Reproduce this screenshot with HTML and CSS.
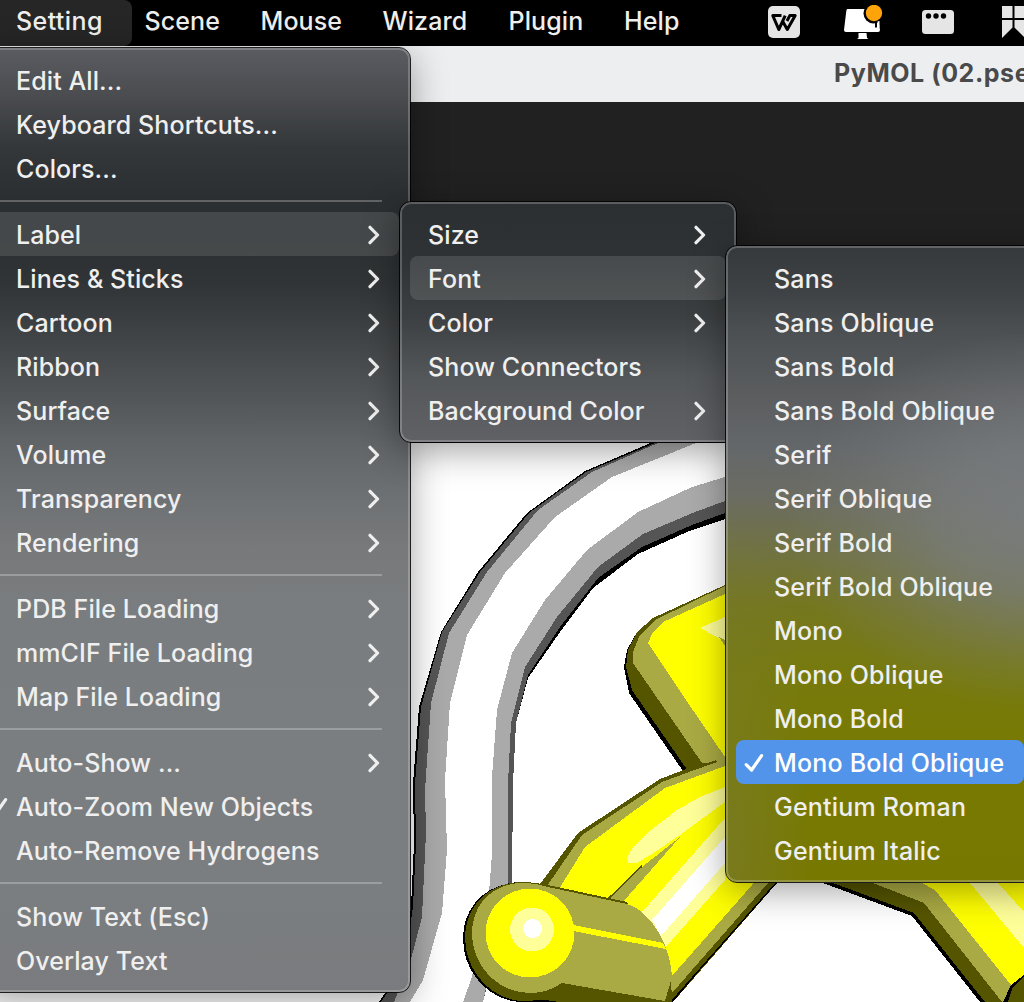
FILE: index.html
```html
<!DOCTYPE html>
<html lang="en">
<head>
<meta charset="utf-8">
<title>PyMOL</title>
<link rel="stylesheet" href="styles.css">
</head>
<body>
<svg class="defs" aria-hidden="true">
  <symbol id="chev" viewBox="0 0 12 20"><path d="M2 2.300 9.600 10 2 17.700" fill="none" stroke="currentColor" stroke-width="3.200" stroke-linecap="round" stroke-linejoin="round"/></symbol>
  <symbol id="check" viewBox="0 0 20 20"><path d="M2.200 11.600 7.600 17 17.600 2.600" fill="none" stroke="currentColor" stroke-width="3.200" stroke-linecap="round" stroke-linejoin="round"/></symbol>
</svg>

<header class="menubar">
  <nav class="titles">
    <span class="title open">Setting</span>
    <span class="title scene-title">Scene</span>
    <span class="title mouse">Mouse</span>
    <span class="title wizard">Wizard</span>
    <span class="title plugin">Plugin</span>
    <span class="title help">Help</span>
  </nav>
  <div class="status">
    <svg width="32" height="32" viewBox="0 0 32 32"><rect width="32" height="32" rx="5" fill="#e5e5e5"/><path d="M13.500 9.600H4.800L10.800 23.500 17.200 9.600M14.200 14.500 19.300 23.500 27.200 9.600H21.800L19 15" fill="none" stroke="#000" stroke-width="3" stroke-linejoin="round"/></svg>
    <svg width="40" height="36" viewBox="0 0 40 36"><path d="M4.500 4H24L35.500 16 37 25Q37 27 35 27H3Q1 27 1 25L3.300 6Q3.500 4 4.500 4Z" fill="#fff"/><path d="M15.500 28H23.500L24 33 25.500 34H14L15.500 33Z" fill="#fff"/><circle cx="30.500" cy="8.500" r="10" fill="#000"/><path d="M33 16V22.500" stroke="#000" stroke-width="2"/><path d="M34.500 16.500 36.500 23V16Z" fill="#fff"/><circle cx="31" cy="8" r="8.200" fill="#ffa30a"/></svg>
    <svg width="32" height="24" viewBox="0 0 32 24"><rect width="32" height="24" rx="3.500" fill="#e5e5e5"/><circle cx="6.500" cy="6" r="2.700"/><circle cx="14" cy="6" r="2.700"/><circle cx="21.500" cy="6" r="2.700"/></svg>
    <svg width="22" height="32" viewBox="0 0 22 32"><path d="M0 0H10.500V12H0ZM12.500 0H22V12H12.500ZM0 14H10.500V21.500L0 32ZM12.500 14H22V31L12.500 21.500Z" fill="#e5e5e5"/></svg>
  </div>
</header>

<main class="window">
  <div class="titlebar">PyMOL (02.pse</div>
  <div class="toolbar"></div>
  <svg class="viewport" viewBox="0 443 1024 559" shape-rendering="crispEdges">
    <rect y="443" width="1024" height="559" fill="#fff"/>
    <!-- ribbon tube, painted from its outline inwards -->
    <path fill="#000" d="M725 415 653 442 585 471 527 513 478 572 441 632 419 707 413 783 414 843 411 907 403 967 379 1002H483L508 883 513 783 516 723 528 678 560 632 593 588 638 554 687 532 725 519Z"/>
    <path fill="#555" d="M725 415 655 443 586 472 529 513 480 572 442 632 421 707 415 783 416 843 413 907 404 967 381 1002H483L512 883 513 783 516 723 528 675 560 627 598 578 642 547 692 525 725 513Z"/>
    <path fill="#aaa" d="M725 415 658 443 592 472 538 510 487 572 449 633 431 703 425 790 426 833 422 917 410 963 394 1002H483L508 883 508 783 511 723 525 667 557 617 598 567 643 534 695 512 725 501Z"/>
    <path fill="#fff" d="M725 431 696 443 612 477 555 517 505 573 467 635 450 703 445 780 447 850 442 913 423 980 410 1002H463L472 977 489 893 492 853V777L497 710 512 653 545 600 587 550 638 512 692 487 725 477Z"/>
    <!-- upper stick -->
    <path fill="#000" d="M725 585 653 618 637 632 627 650 624 667 629 693 683 771 725 770Z"/>
    <path fill="#550" d="M725 585 653 618 637 632 628 650 626 667 632 690 688 771 725 770Z"/>
    <path fill="#aa4" d="M725 586 655 620 639 637 633 652V663L702 763 725 770Z"/>
    <path fill="#ff0" d="M725 594 663 622 653 632 648 643 686 700 725 757Z"/>
    <path fill="#ff9" d="M725 617 700 628 717 637 725 642Z"/>
    <path fill="#aa4" d="M719 637 725 640V646Z"/>
    <!-- lower stick -->
    <path fill="#550" d="M540 884 578 833 660 779 702 763 725 757H790V868L777 883 673 1002H560Z"/>
    <path fill="#000" d="M790 868 777 883 700 970 673 1002H670L775 883Z"/>
    <path fill="#aa4" d="M547 886 582 835 662 782 716 762 702 763 725 757H780L768 883 665 1001H560Z"/>
    <path fill="#550" d="M690 769 716 760 717 762 692 771Z"/>
    <path fill="#ff0" d="M559 889 585 847 665 788 725 766H760V876L671 977 607 899Z"/>
    <path fill="#ff9" d="M628 863 627 857 632 849 647 833 677 810 700 797 725 787V802L680 835 652 854 637 863Z"/>
    <path fill="#aa4" d="M680 837 642 867 607 899 622 903Z"/>
    <path fill="none" stroke="#550" stroke-width="1.500" d="M642 866 608 899"/>
    <path fill="#ff9" d="M725 818 642 912 665 948 725 880Z"/>
    <path fill="#fff" d="M725 837 652 920 661 936 725 863Z"/>
    <!-- rounded end of the lower stick -->
    <path fill="#000" d="M523 882C485 882 463 908 463 938C463 972 488 1000 520 1002H667L550 890Z"/>
    <path fill="#550" d="M523 882C487 882 465 908 465 937C465 971 490 998 520 1001L545 1000 560 1002H672L671 977 627 902 548 885Q535 882 523 882Z"/>
    <path fill="#aa4" d="M523 883C491 883 472 906 472 933C472 966 498 993 530 993Q548 993 562 983L665 1001 672 977Q670 945 650 920 638 907 627 904L548 887Q535 883 523 883Z"/>
    <circle cx="530" cy="933" r="44.500" fill="#ff0"/>
    <path fill="#ff0" d="M573 925 663 943 666 949 573 931Z"/>
    <circle cx="532" cy="929.500" r="22" fill="#ff9"/>
    <circle cx="532.500" cy="928.500" r="9.500" fill="#fff"/>
    <!-- right stick -->
    <path fill="#000" d="M823 883 912 916 980 1002H1024V883Z"/>
    <path fill="#550" d="M833 883 914 913 985 1002H1024V883Z"/>
    <path fill="#aa4" d="M873 883 924 903 1002 1002H1024V883Z"/>
    <path fill="#ff0" d="M922 883 935 890 1011 985 1024 975V883Z"/>
    <path fill="#ff9" d="M970 883 1024 948V912L998 883Z"/>
    <path fill="#000" d="M1024 975 1011 985 1003 1002H1024Z"/>
    <path fill="#550" d="M1024 977 1013 987 1008 1002H1024Z"/>
  </svg>
</main>

<section class="menu setting-menu">
  <div class="item">Edit All...</div>
  <div class="item">Keyboard Shortcuts...</div>
  <div class="item">Colors...</div>
  <hr>
  <div class="item active">Label<svg class="chev"><use href="#chev"/></svg></div>
  <div class="item">Lines &amp; Sticks<svg class="chev"><use href="#chev"/></svg></div>
  <div class="item">Cartoon<svg class="chev"><use href="#chev"/></svg></div>
  <div class="item">Ribbon<svg class="chev"><use href="#chev"/></svg></div>
  <div class="item">Surface<svg class="chev"><use href="#chev"/></svg></div>
  <div class="item">Volume<svg class="chev"><use href="#chev"/></svg></div>
  <div class="item">Transparency<svg class="chev"><use href="#chev"/></svg></div>
  <div class="item">Rendering<svg class="chev"><use href="#chev"/></svg></div>
  <hr>
  <div class="item">PDB File Loading<svg class="chev"><use href="#chev"/></svg></div>
  <div class="item">mmCIF File Loading<svg class="chev"><use href="#chev"/></svg></div>
  <div class="item">Map File Loading<svg class="chev"><use href="#chev"/></svg></div>
  <hr>
  <div class="item">Auto-Show ...<svg class="chev"><use href="#chev"/></svg></div>
  <div class="item"><svg class="check"><use href="#check"/></svg>Auto-Zoom New Objects</div>
  <div class="item">Auto-Remove Hydrogens</div>
  <hr>
  <div class="item">Show Text (Esc)</div>
  <div class="item">Overlay Text</div>
</section>

<section class="menu label-menu">
  <div class="item">Size<svg class="chev"><use href="#chev"/></svg></div>
  <div class="item active">Font<svg class="chev"><use href="#chev"/></svg></div>
  <div class="item">Color<svg class="chev"><use href="#chev"/></svg></div>
  <div class="item">Show Connectors</div>
  <div class="item">Background Color<svg class="chev"><use href="#chev"/></svg></div>
</section>

<section class="menu font-menu">
  <div class="item">Sans</div>
  <div class="item">Sans Oblique</div>
  <div class="item">Sans Bold</div>
  <div class="item">Sans Bold Oblique</div>
  <div class="item">Serif</div>
  <div class="item">Serif Oblique</div>
  <div class="item">Serif Bold</div>
  <div class="item">Serif Bold Oblique</div>
  <div class="item">Mono</div>
  <div class="item">Mono Oblique</div>
  <div class="item">Mono Bold</div>
  <div class="item selected"><svg class="check"><use href="#check"/></svg>Mono Bold Oblique</div>
  <div class="item">Gentium Roman</div>
  <div class="item">Gentium Italic</div>
</section>
</body>
</html>
```
FILE: styles.css
```css
* { box-sizing: border-box; }

body {
  margin: 0;
  width: 1024px;
  height: 1002px;
  overflow: hidden;
  position: relative;
  background: #fff;
  font-family: Inter, "Liberation Sans", sans-serif;
  font-size: 25px;
  font-weight: 450;
  letter-spacing: .1px;
  color: #efefef;
}

.defs { position: absolute; width: 0; height: 0; }

.menubar {
  display: flex;
  justify-content: space-between;
  height: 46px;
  background: #000;
}
.titles { display: flex; }
.title {
  height: 46px;
  padding-left: 12.500px;
  line-height: 43px;
  white-space: nowrap;
}
.title.open {
  width: 132px;
  padding-left: 16px;
  border-radius: 0 8px 8px 0;
  background: #262626;
  letter-spacing: .4px;
}
.scene-title { width: 116px; }
.mouse { width: 122px; }
.wizard { width: 126px; }
.plugin { width: 115px; }
.title.help { padding-left: 13px; }
.status {
  display: flex;
  align-items: flex-start;
  width: 256px;
}
.status svg { flex: none; }
.status svg:nth-child(1) { margin-top: 6px; }
.status svg:nth-child(2) { margin: 5px 0 0 43px; }
.status svg:nth-child(3) { margin: 10px 0 0 39px; }
.status svg:nth-child(4) { margin: 6px 0 0 48px; }

.titlebar {
  height: 56px;
  padding-left: 834px;
  overflow: hidden;
  background: #edeef0;
  color: #4a4a4a;
  font-weight: 700;
  letter-spacing: .55px;
  line-height: 55px;
  white-space: nowrap;
}
.toolbar { height: 341px; background: #212121; }
.viewport { display: block; width: 1024px; height: 559px; }

/* the open menus lie over the window */
.menu {
  position: absolute;
  border: 2px solid rgba(255, 255, 255, .22);
  border-radius: 11px;
  outline: 1px solid rgba(0, 0, 0, .85);
  box-shadow: 0 8px 36px rgba(0, 0, 0, .38);
  background-origin: border-box;
}
.item {
  position: relative;
  display: flex;
  align-items: center;
  justify-content: space-between;
  height: 44px;
  padding-top: 2px;
  border-radius: 8px;
  white-space: nowrap;
}
.active { background: rgba(255, 255, 255, .12); }
.chev { width: 12px; height: 20px; flex: none; }
.check { position: absolute; width: 20px; height: 20px; }

.setting-menu {
  left: -20px;
  top: 48px;
  width: 430px;
  height: 944px;
  padding: 8px 9px 0 8px;
  background-image: linear-gradient(#5a5c61 0, #4b4d51 45px, #34373a 100px, #2c2f31 150px, #2c2f31 190px, #303436 235px, #414446 290px, #535659 350px, #636669 400px, #6e7173 450px, #77797b 500px, #7a7d7f 560px, #7a7e80 700px, #7a7e80 850px, #7a7b7e 100%);
}
.setting-menu .item { padding-left: 26px; padding-right: 19px; }
.setting-menu .check { left: -2px; }
.setting-menu hr {
  height: 2px;
  margin: 10px 17px 10px 0;
  border: 0;
  background: rgba(255, 255, 255, .25);
}

.label-menu {
  left: 400px;
  top: 202px;
  width: 336px;
  height: 240px;
  padding: 8px;
  background-image: linear-gradient(#2c2f32 0, #2f3335 60px, #3d4042 115px, #54575a 175px, #606165 100%);
}
.label-menu .item { padding-left: 18px; padding-right: 20px; }

.font-menu {
  left: 726px;
  top: 246px;
  width: 320px;
  height: 636px;
  padding: 8px;
  letter-spacing: .2px;
  background-image:
    radial-gradient(ellipse 260px 190px at 320px 275px, rgba(122, 125, 130, .9) 0, rgba(122, 125, 128, .7) 40%, rgba(122, 125, 128, .25) 75%, rgba(122, 125, 128, 0) 100%),
    radial-gradient(ellipse 90px 330px at 0 600px, rgba(122, 124, 60, .5) 0, rgba(122, 124, 60, 0) 100%),
    linear-gradient(#36393b 0, #3f4244 45px, #4d5153 90px, #5b5d5f 150px, #64676a 200px, #6b6c62 250px, #71733f 310px, #75771f 360px, #777a0c 430px, #777a03 500px, #777800 100%);
}
.font-menu .item { padding-left: 38px; }
.font-menu .selected { width: 288px; background: #5294ea; color: #fff; }
.font-menu .check { left: 8px; }
```
